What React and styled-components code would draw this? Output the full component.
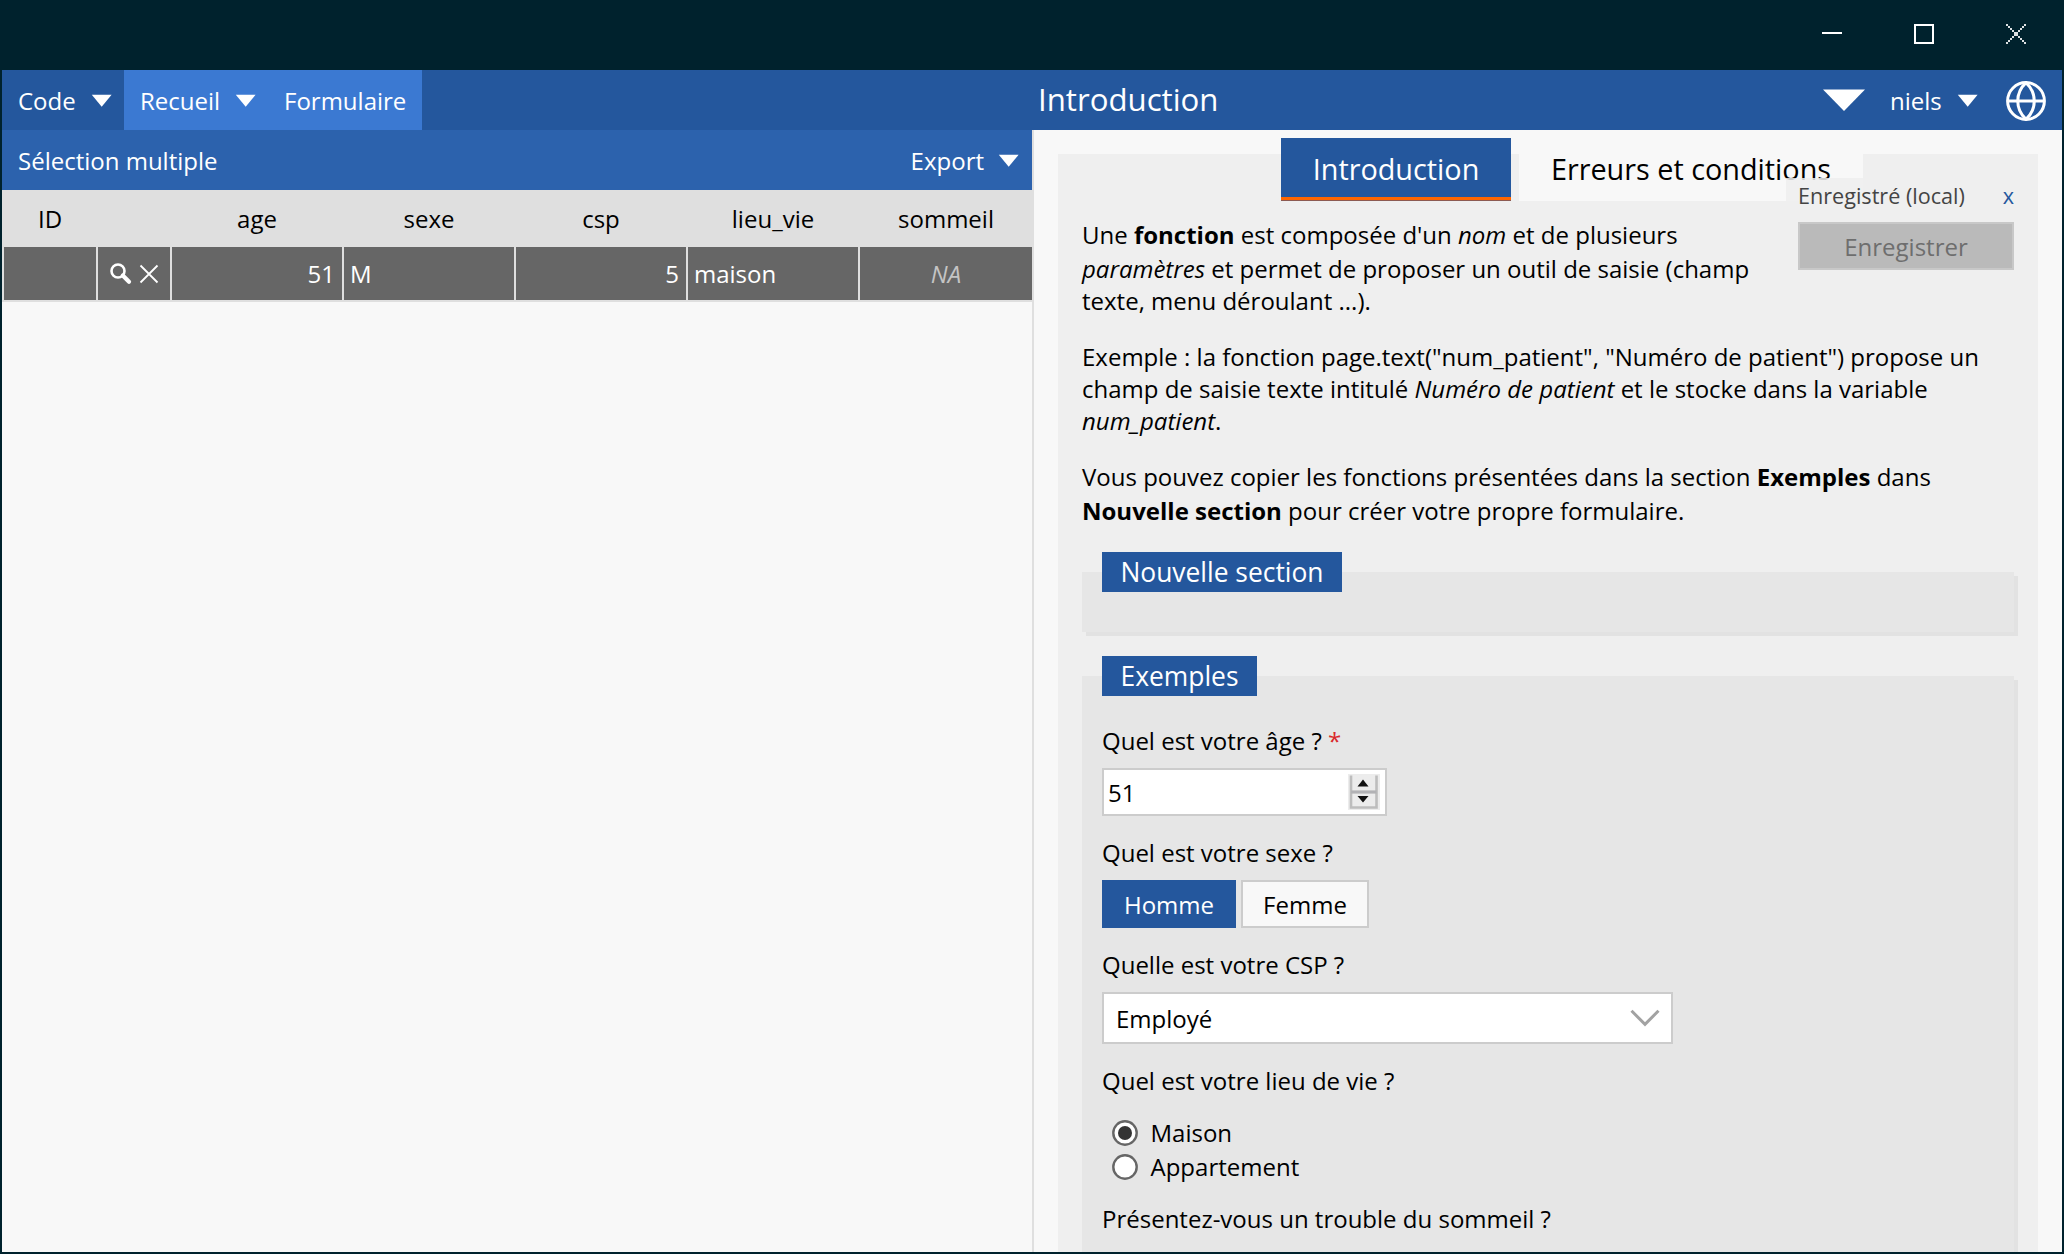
import React from "react";
import styled, { createGlobalStyle } from "styled-components";

const GlobalStyle = createGlobalStyle`
  * { box-sizing: border-box; }
  body { margin: 0; background: #00222d; overflow: hidden; }
`;

const Window = styled.div`
  width: 2064px;
  height: 1254px;
  padding: 0 2px 2px;
  display: flex;
  flex-direction: column;
  overflow: hidden;
  background: #00222d;
  color: #000;
  font: 24px "Open Sans", "Noto Sans", sans-serif;
  white-space: nowrap;
`;

const TitleBar = styled.div`
  flex: none;
  height: 70px;
  padding: 24px 36px 0 0;
  display: flex;
  justify-content: flex-end;
  gap: 72px;
`;

const MenuBar = styled.nav`
  flex: none;
  height: 60px;
  display: flex;
  background: #24579d;
  color: #fff;
`;

const MenuItem = styled.div`
  flex: none;
  display: flex;
  align-items: center;
  gap: 15px;
  height: 60px;
  width: ${(p) => p.$width}px;
  padding-left: 16px;
  background: ${(p) => (p.$active ? "#3b79d2" : "transparent")};
`;

const MenuSpacer = styled.div`
  flex: 1;
`;

const PageTitle = styled.div`
  width: 785px;
  font-size: 31.2px;
  line-height: 58px;
`;

const IconSlot = styled.div`
  display: flex;
  align-items: center;
  padding-top: ${(p) => p.$top || 0}px;
  margin-right: ${(p) => p.$right}px;
`;

const Main = styled.main`
  flex: 1;
  min-height: 0;
  display: flex;
  overflow: hidden;
  background: #f8f8f8;
`;

const DataPane = styled.section`
  width: 1032px;
  border-right: 2px solid #dfdfdf;
`;

const Toolbar = styled.div`
  height: 60px;
  padding: 0 12px 0 16px;
  display: flex;
  align-items: center;
  justify-content: space-between;
  background: #2c62ad;
  color: #fff;
`;

const ToolbarGroup = styled.div`
  display: flex;
  align-items: center;
  gap: 14px;
`;

const GridRow = styled.div`
  display: grid;
  grid-template-columns: 92px 72px repeat(4, 170px) 172px;
  column-gap: 2px;
  height: ${(p) => (p.$head ? 57 : 55)}px;
  padding: 0 0 ${(p) => (p.$head ? 0 : 2)}px 2px;
  background: #dfdfdf;
  color: ${(p) => (p.$head ? "#000" : "#fff")};
`;

const Cell = styled.div`
  display: flex;
  align-items: center;
  justify-content: ${(p) => p.$align || "center"};
  padding: 0 ${(p) => (p.$align === "flex-end" ? 7 : 6)}px 0 6px;
  background: ${(p) => (p.$filled ? "#666" : "transparent")};
`;

const ActionCell = styled(Cell)`
  gap: 7px;
  padding: 0 5px;
`;

const Missing = styled.em`
  color: #c4c4c4;
`;

const FormPane = styled.section`
  position: relative;
  flex: 1;
  padding: 24px 24px 0;
`;

const FormPage = styled.div`
  display: flow-root;
  height: 1098px;
  padding: 0 24px;
  background: #efefef;
`;

const Tabs = styled.div`
  display: flex;
  gap: 8px;
  margin: -16px 0 18px 199px;
`;

const Tab = styled.div`
  height: 63px;
  width: ${(p) => p.$width}px;
  line-height: 62px;
  text-align: center;
  font-size: 28.8px;
  background: ${(p) => (p.$active ? "#24579d" : "#f8f8f8")};
  color: ${(p) => (p.$active ? "#fff" : "#000")};
  box-shadow: ${(p) => (p.$active ? "inset 0 -1px #8c5a52, inset 0 -4px #ff6600" : "none")};
`;

const Paragraph = styled.div`
  margin-bottom: ${(p) => p.$gap}px;
`;

const Line = styled.div`
  height: ${(p) => p.$h || 32}px;
  line-height: 32px;
`;

const Fieldset = styled.div`
  height: ${(p) => p.$height}px;
  margin-bottom: 44px;
  padding: 0 20px;
  background: #e6e6e6;
  box-shadow: 4px 4px #e2e2e2;
`;

const Legend = styled.div`
  width: ${(p) => p.$width}px;
  height: 40px;
  line-height: 41px;
  text-align: center;
  font-size: 26.4px;
  background: #24579d;
  color: #fff;
  transform: translateY(-20px);
`;

const Label = styled.div`
  height: 32px;
  line-height: 34px;
  margin: ${(p) => p.$top}px 0 12px;
`;

const Required = styled.span`
  color: #d9292b;
`;

const NumberField = styled.div`
  width: 285px;
  height: 48px;
  padding: 0 5px 0 4px;
  display: flex;
  align-items: center;
  justify-content: space-between;
  border: 2px solid #ccc;
  background: #fff;
`;

const Choices = styled.div`
  display: flex;
  gap: 5px;
`;

const Choice = styled.div`
  width: ${(p) => p.$width}px;
  height: 48px;
  line-height: 46px;
  text-align: center;
  border: 2px solid ${(p) => (p.$on ? "#24579d" : "#ccc")};
  background: ${(p) => (p.$on ? "#24579d" : "#f8f8f8")};
  color: ${(p) => (p.$on ? "#fff" : "#000")};
`;

const Select = styled.div`
  width: 571px;
  height: 52px;
  padding: 0 11px 0 12px;
  display: flex;
  align-items: center;
  justify-content: space-between;
  border: 2px solid #ccc;
  background: #fff;
`;

const RadioList = styled.div`
  margin-top: 20px;
`;

const RadioRow = styled.div`
  height: 34px;
  line-height: 33px;
  padding-left: 10px;
  display: flex;
  align-items: flex-start;
  gap: 12.5px;
`;

const RadioDot = styled.span`
  display: flex;
  margin-top: 4px;
`;

/* Floating save box over the form */
const SaveBox = styled.aside`
  position: absolute;
  top: 48px;
  right: 36px;
  width: 240px;
  height: 104px;
  padding: 0 12px;
  background: rgba(239, 239, 239, 0.85);
`;

const SaveStatus = styled.div`
  display: flex;
  justify-content: space-between;
  height: 44px;
  line-height: 35px;
  font-size: 21.6px;
  color: #444;
`;

const CloseLink = styled.span`
  color: #24579d;
`;

const SaveButton = styled.div`
  height: 48px;
  line-height: 46px;
  text-align: center;
  border: 2px solid #c8c8c8;
  background: #bababa;
  color: #6e6e6e;
`;

const Arrow = ({ w = 22, h = 13 }) => (
  <svg width={w} height={h} viewBox="0 0 22 13" preserveAspectRatio="none">
    <path d="M0.8 0.8H20.600L10.700 12.800Z" fill="#fff" />
  </svg>
);

const BigArrow = () => (
  <svg width="42" height="22" viewBox="0 0 42 22">
    <path d="M0 0.500H42L21 22Z" fill="#fff" />
  </svg>
);

const Globe = () => (
  <svg width="40" height="40" viewBox="0 0 40 40" fill="none" stroke="#fff" strokeWidth="3">
    <circle cx="20" cy="20" r="18.4" />
    <path d="M20 1.6C9 12 9 28 20 38.400C31 28 31 12 20 1.600Z" />
    <path d="M1.6 20H38.4" />
  </svg>
);

const Minimize = () => (
  <svg width="20" height="20" shapeRendering="crispEdges">
    <path d="M0 8H20V10H0Z" fill="#fff" />
  </svg>
);

const Maximize = () => (
  <svg width="20" height="20" shapeRendering="crispEdges">
    <path d="M1 1H19V19H1Z" fill="none" stroke="#fff" strokeWidth="2" />
  </svg>
);

/* Stepped diagonals on a 10 by 10 grid */
const Close = () => (
  <svg width="20" height="20" viewBox="0 0 10 10" shapeRendering="crispEdges" fill="#dde1e3">
    {Array.from({ length: 10 }, (_, i) => (
      <path key={i} d={`M${i} ${i}h1v1h-1zM${9 - i} ${i}h1v1h-1z`} />
    ))}
  </svg>
);

const SearchIcon = () => (
  <svg width="22" height="22" viewBox="0 0 22 22" fill="none" stroke="#fff">
    <circle cx="8" cy="8" r="6.5" strokeWidth="2.6" />
    <path d="M12.8 12.6L19 18.800" strokeWidth="4.2" strokeLinecap="round" />
  </svg>
);

const DeleteIcon = () => (
  <svg width="20" height="20" viewBox="0 0 20 20">
    <path d="M1.5 1.5L18.5 18.5M18.5 1.5L1.5 18.5" stroke="#fff" strokeWidth="1.8" />
  </svg>
);

const Spinner = () => (
  <svg width="32" height="36" viewBox="0 0 32 36">
    <rect width="32" height="36" fill="#ececec" />
    <path d="M3 1.500V33.500H28.500V1.500" fill="none" stroke="#bdbdbd" strokeWidth="2.600" />
    <path d="M3 18H28.500" stroke="#b2b2b5" strokeWidth="3.200" />
    <path d="M9.500 12.500L15 5.500L20.500 12.500Z M9.500 22H20.500L15 28.500Z" fill="#111" />
  </svg>
);

const Chevron = () => (
  <svg width="30" height="18" viewBox="0 0 30 18">
    <path d="M1.500 1.800L15 15.300L28.500 1.800" fill="none" stroke="#a2a2a2" strokeWidth="3" />
  </svg>
);

const Radio = ({ on }) => (
  <svg width="26" height="26" viewBox="0 0 26 26">
    <circle cx="13" cy="13" r="11.7" fill="#fff" stroke="#666" strokeWidth="2.4" />
    {on && <circle cx="13" cy="13" r="7" fill="#333" />}
  </svg>
);

export default function App() {
  return (
    <>
      <GlobalStyle />
      <Window>
        <TitleBar>
          <Minimize />
          <Maximize />
          <Close />
        </TitleBar>
        <MenuBar>
          <MenuItem $width={122}>Code<Arrow /></MenuItem>
          <MenuItem $width={144} $active>Recueil<Arrow /></MenuItem>
          <MenuItem $width={154} $active>Formulaire</MenuItem>
          <MenuSpacer />
          <PageTitle>Introduction</PageTitle>
          <IconSlot $right={9}><BigArrow /></IconSlot>
          <MenuItem $width={132}>niels<Arrow /></MenuItem>
          <IconSlot $right={16} $top={2}><Globe /></IconSlot>
        </MenuBar>
        <Main>
          <DataPane>
            <Toolbar>
              <span>Sélection multiple</span>
              <ToolbarGroup>Export<Arrow /></ToolbarGroup>
            </Toolbar>
            <GridRow $head>
              <Cell>ID</Cell>
              <Cell />
              <Cell>age</Cell>
              <Cell>sexe</Cell>
              <Cell>csp</Cell>
              <Cell>lieu_vie</Cell>
              <Cell>sommeil</Cell>
            </GridRow>
            <GridRow>
              <Cell $filled />
              <ActionCell $filled><SearchIcon /><DeleteIcon /></ActionCell>
              <Cell $filled $align="flex-end">51</Cell>
              <Cell $filled $align="flex-start">M</Cell>
              <Cell $filled $align="flex-end">5</Cell>
              <Cell $filled $align="flex-start">maison</Cell>
              <Cell $filled><Missing>NA</Missing></Cell>
            </GridRow>
          </DataPane>
          <FormPane>
            <FormPage>
              <Tabs>
                <Tab $width={230} $active>Introduction</Tab>
                <Tab $width={344}>Erreurs et conditions</Tab>
              </Tabs>
              <Paragraph $gap={24}>
                <Line $h={34}>Une <b>fonction</b> est composée d'un <i>nom</i> et de plusieurs</Line>
                <Line><i>paramètres</i> et permet de proposer un outil de saisie (champ</Line>
                <Line>texte, menu déroulant ...).</Line>
              </Paragraph>
              <Paragraph $gap={24}>
                <Line>Exemple : la fonction page.text("num_patient", "Numéro de patient") propose un</Line>
                <Line>champ de saisie texte intitulé <i>Numéro de patient</i> et le stocke dans la variable</Line>
                <Line><i>num_patient</i>.</Line>
              </Paragraph>
              <Paragraph $gap={45}>
                <Line $h={34}>Vous pouvez copier les fonctions présentées dans la section <b>Exemples</b> dans</Line>
                <Line><b>Nouvelle section</b> pour créer votre propre formulaire.</Line>
              </Paragraph>
              <Fieldset $height={60}>
                <Legend $width={240}>Nouvelle section</Legend>
              </Fieldset>
              <Fieldset $height={600}>
                <Legend $width={155}>Exemples</Legend>
                <Label $top={8}>Quel est votre âge ? <Required>*</Required></Label>
                <NumberField>51<Spinner /></NumberField>
                <Label $top={20}>Quel est votre sexe ?</Label>
                <Choices>
                  <Choice $width={134} $on>Homme</Choice>
                  <Choice $width={128}>Femme</Choice>
                </Choices>
                <Label $top={20}>Quelle est votre CSP ?</Label>
                <Select>Employé<Chevron /></Select>
                <Label $top={20}>Quel est votre lieu de vie ?</Label>
                <RadioList>
                  <RadioRow><RadioDot><Radio on /></RadioDot>Maison</RadioRow>
                  <RadioRow><RadioDot><Radio /></RadioDot>Appartement</RadioRow>
                </RadioList>
                <Label $top={18}>Présentez-vous un trouble du sommeil ?</Label>
              </Fieldset>
            </FormPage>
            <SaveBox>
              <SaveStatus><span>Enregistré (local)</span><CloseLink>x</CloseLink></SaveStatus>
              <SaveButton>Enregistrer</SaveButton>
            </SaveBox>
          </FormPane>
        </Main>
      </Window>
    </>
  );
}
